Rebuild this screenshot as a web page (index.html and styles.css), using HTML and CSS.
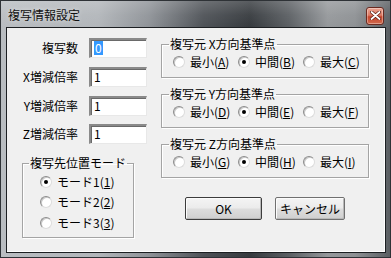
FILE: index.html
```html
<!DOCTYPE html>
<html lang="ja">
<head>
<meta charset="utf-8">
<title>複写情報設定</title>
<link rel="stylesheet" href="styles.css">
</head>
<body>
<div class="window">
  <div class="titlebar">
    <span class="title">複写情報設定</span>
    <span class="close" aria-label="閉じる">
      <svg width="11" height="9" viewBox="0 0 11 9">
        <path d="M1.5 1 L9.5 8 M9.5 1 L1.5 8" stroke="#5a1a10" stroke-width="3.2" stroke-linecap="round"/>
        <path d="M1.5 1 L9.5 8 M9.5 1 L1.5 8" stroke="#ffffff" stroke-width="1.8" stroke-linecap="round"/>
      </svg>
    </span>
  </div>
  <div class="client">
    <div class="left">
      <div class="fields">
        <span class="label">複写数</span>
        <span class="input"><span class="sel">0</span></span>
        <span class="label">X増減倍率</span>
        <span class="input">1</span>
        <span class="label">Y増減倍率</span>
        <span class="input">1</span>
        <span class="label">Z増減倍率</span>
        <span class="input">1</span>
      </div>
      <fieldset class="group group-left">
        <legend>複写先位置モード</legend>
        <div class="col">
          <label class="radio"><span class="dot on"></span>モード1(<u>1</u>)</label>
          <label class="radio"><span class="dot"></span>モード2(<u>2</u>)</label>
          <label class="radio"><span class="dot"></span>モード3(<u>3</u>)</label>
        </div>
      </fieldset>
    </div>
    <div class="right">
      <fieldset class="group group-right">
        <legend>複写元 X方向基準点</legend>
        <div class="row">
          <label class="radio item"><span class="dot"></span>最小(<u>A</u>)</label>
          <label class="radio item"><span class="dot on"></span>中間(<u>B</u>)</label>
          <label class="radio item"><span class="dot"></span>最大(<u>C</u>)</label>
        </div>
      </fieldset>
      <fieldset class="group group-right">
        <legend>複写元 Y方向基準点</legend>
        <div class="row">
          <label class="radio item"><span class="dot"></span>最小(<u>D</u>)</label>
          <label class="radio item"><span class="dot on"></span>中間(<u>E</u>)</label>
          <label class="radio item"><span class="dot"></span>最大(<u>F</u>)</label>
        </div>
      </fieldset>
      <fieldset class="group group-right">
        <legend>複写元 Z方向基準点</legend>
        <div class="row">
          <label class="radio item"><span class="dot"></span>最小(<u>G</u>)</label>
          <label class="radio item"><span class="dot on"></span>中間(<u>H</u>)</label>
          <label class="radio item"><span class="dot"></span>最大(<u>I</u>)</label>
        </div>
      </fieldset>
      <div class="buttons">
        <span class="btn btn-default">OK</span>
        <span class="btn btn-cancel">キャンセル</span>
      </div>
    </div>
  </div>
</div>
</body>
</html>
```
FILE: styles.css
```css
* { box-sizing: border-box; }
html, body { margin: 0; padding: 0; }
body {
  width: 391px;
  height: 258px;
  overflow: hidden;
  font-family: "Noto Sans CJK JP", "Noto Sans", sans-serif;
  font-size: 12px;
  color: #000;
  background: #444;
}
.window {
  width: 391px;
  height: 258px;
  display: flex;
  flex-direction: column;
  border: 1px solid #2e3236;
  padding: 0 4px 4px 5px;
  background:
    linear-gradient(to bottom, rgba(255,255,255,0.18) 0px, rgba(255,255,255,0.05) 14px, rgba(0,0,0,0) 27px),
    linear-gradient(to right, #b9bdc1 0%, #b2b6ba 25%, #8f9398 38%, #4e5257 52%, #363a3e 64%, #5b5f63 74%, #95989b 84%, #8e9194 91%, #5a5e62 100%);
}
.titlebar {
  height: 26px;
  flex: none;
  display: flex;
  align-items: center;
  justify-content: space-between;
  padding: 0 2px 0 2px;
}
.title {
  font-size: 12px;
  color: #111;
  padding-top: 1px;
  text-shadow: 0 0 4px rgba(255,255,255,0.7);
}
.close {
  width: 18px;
  height: 18px;
  margin-top: 3px;
  border: 1px solid #6a2a20;
  border-radius: 3px;
  background: linear-gradient(to bottom, #eba593 0%, #dc7a64 45%, #c6452c 55%, #d06a4e 100%);
  box-shadow: inset 0 0 0 1px rgba(255,255,255,0.35);
  display: flex;
  align-items: center;
  justify-content: center;
}
.client {
  flex: 1;
  display: flex;
  background: #f0f0f0;
  border: 1px solid #1c1f22;
  box-shadow: inset -1px -1px 0 #ffffff;
}
.left {
  width: 154px;
  flex: none;
  display: flex;
  flex-direction: column;
  padding-top: 10px;
}
.fields {
  display: grid;
  grid-template-columns: 71px 58px;
  grid-auto-rows: 20px;
  column-gap: 11px;
  row-gap: 8.8px;
}
.label {
  text-align: right;
  line-height: 20px;
  white-space: nowrap;
}
.input {
  background: #fff;
  border-style: solid;
  border-width: 2px 1px 1px 2px;
  border-color: #8a8a8a #e8e8e8 #e8e8e8 #8a8a8a;
  box-shadow: inset 1px 1px 0 #6a6a6a;
  padding-left: 3px;
  line-height: 16px;
  font-size: 12px;
}
.sel {
  display: inline-block;
  background: #3399ff;
  color: #fff;
  padding: 0 1px;
  line-height: 14px;
  margin-top: 1px;
}
.group {
  margin: 0;
  padding: 0;
  border: 1px solid #a4a4a4;
  box-shadow: inset 1px 1px 0 #ffffff, 1px 1px 0 #ffffff;
  min-width: 0;
}
.group legend {
  padding: 0 1px;
  line-height: 14px;
  font-size: 12px;
  white-space: nowrap;
}
.group-left {
  margin: 12px 0 0 15px;
  width: 112px;
  height: 82px;
  padding: 1px 0 0 0;
}
.group-left legend { margin-left: 6px; }
.col {
  display: flex;
  flex-direction: column;
  padding-left: 17px;
}
.col .radio { height: 20.5px; }
.radio {
  display: flex;
  align-items: center;
  white-space: nowrap;
  line-height: 14px;
}
.radio u { text-decoration: underline; text-underline-offset: 1px; }
.dot {
  width: 12px;
  height: 12px;
  border-radius: 50%;
  flex: none;
  margin-right: 5px;
  background: #fff;
  border: 1px solid;
  border-color: #8c8c8c #dcdcdc #dcdcdc #8c8c8c;
  box-shadow: inset 1px 1px 0 #c8c8c8;
  display: flex;
  align-items: center;
  justify-content: center;
}
.dot.on::after {
  content: "";
  width: 4px;
  height: 4px;
  border-radius: 50%;
  background: #000;
}
.right {
  flex: 1;
  display: flex;
  flex-direction: column;
  padding-top: 9px;
}
.group-right {
  width: 208px;
  padding: 1px 0 5px 0;
  margin-bottom: 9px;
}
.group-right legend { margin-left: 7px; }
.row {
  display: flex;
  height: 20px;
  align-items: center;
  gap: 2px;
  padding-left: 11px;
}
.row .item { width: 63px; }
.buttons {
  display: flex;
  gap: 13px;
  margin: 10px 0 0 24px;
}
.btn {
  height: 23px;
  display: flex;
  align-items: center;
  justify-content: center;
  border: 1px solid #707070;
  border-radius: 2px;
  background: linear-gradient(to bottom, #f4f4f4 0%, #ebebeb 48%, #dddddd 52%, #cfcfcf 100%);
  box-shadow: inset 1px 1px 0 #fcfcfc, inset -1px -1px 0 #b8b8b8;
  font-size: 12px;
}
.btn-default {
  width: 77px;
  border-color: #3c3c3c;
}
.btn-cancel { width: 70px; }
```
